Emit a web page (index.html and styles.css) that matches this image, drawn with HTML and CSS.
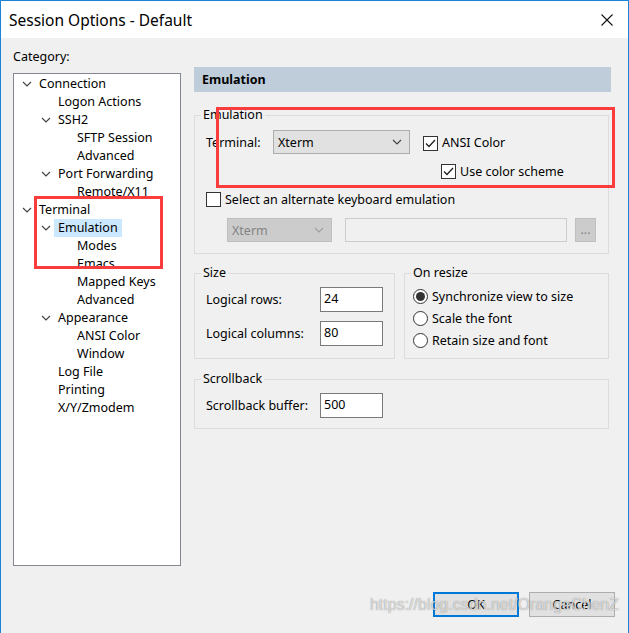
FILE: index.html
```html
<!DOCTYPE html>
<html lang="en">
<head>
    <meta charset="UTF-8">
    <title>Session Options - Default</title>
    <link rel="stylesheet" href="styles.css">
</head>
<body>
    <div class="window">
        <div class="titlebar">
            <span class="title">Session Options - Default</span>
            <svg class="close" width="12" height="12" viewBox="0 0 12 12">
                <path d="M0.5 0.5 L11.5 11.5 M11.5 0.5 L0.5 11.5" stroke="#111" stroke-width="1.1" fill="none"/>
            </svg>
        </div>

        <div class="dialog">
            <div class="main">
                <div class="left">
                    <div class="cat-label">Category:</div>
                    <ul class="tree">
                        <li class="lvl0"><span class="chev"><svg width="10" height="6" viewBox="0 0 10 6"><polyline points="1,1 5,5 9,1"/></svg></span><span class="txt">Connection</span></li>
                        <li class="lvl1"><span class="chev"></span><span class="txt">Logon Actions</span></li>
                        <li class="lvl1"><span class="chev"><svg width="10" height="6" viewBox="0 0 10 6"><polyline points="1,1 5,5 9,1"/></svg></span><span class="txt">SSH2</span></li>
                        <li class="lvl2"><span class="chev"></span><span class="txt">SFTP Session</span></li>
                        <li class="lvl2"><span class="chev"></span><span class="txt">Advanced</span></li>
                        <li class="lvl1"><span class="chev"><svg width="10" height="6" viewBox="0 0 10 6"><polyline points="1,1 5,5 9,1"/></svg></span><span class="txt">Port Forwarding</span></li>
                        <li class="lvl2"><span class="chev"></span><span class="txt">Remote/X11</span></li>
                        <li class="lvl0"><span class="chev"><svg width="10" height="6" viewBox="0 0 10 6"><polyline points="1,1 5,5 9,1"/></svg></span><span class="txt">Terminal</span></li>
                        <li class="lvl1"><span class="chev"><svg width="10" height="6" viewBox="0 0 10 6"><polyline points="1,1 5,5 9,1"/></svg></span><span class="txt selected">Emulation</span></li>
                        <li class="lvl2"><span class="chev"></span><span class="txt">Modes</span></li>
                        <li class="lvl2"><span class="chev"></span><span class="txt">Emacs</span></li>
                        <li class="lvl2"><span class="chev"></span><span class="txt">Mapped Keys</span></li>
                        <li class="lvl2"><span class="chev"></span><span class="txt">Advanced</span></li>
                        <li class="lvl1"><span class="chev"><svg width="10" height="6" viewBox="0 0 10 6"><polyline points="1,1 5,5 9,1"/></svg></span><span class="txt">Appearance</span></li>
                        <li class="lvl2"><span class="chev"></span><span class="txt">ANSI Color</span></li>
                        <li class="lvl2"><span class="chev"></span><span class="txt">Window</span></li>
                        <li class="lvl1"><span class="chev"></span><span class="txt">Log File</span></li>
                        <li class="lvl1"><span class="chev"></span><span class="txt">Printing</span></li>
                        <li class="lvl1"><span class="chev"></span><span class="txt">X/Y/Zmodem</span></li>
                    </ul>
                </div>

                <div class="right">
                    <div class="page-head">Emulation</div>

                    <fieldset class="group emu">
                        <legend>Emulation</legend>
                        <div class="row term-row">
                            <span class="lbl term-lbl">Terminal:</span>
                            <div class="combo term-combo">
                                <span>Xterm</span>
                                <svg width="10" height="6" viewBox="0 0 10 6"><polyline points="1,1 5,5 9,1"/></svg>
                            </div>
                            <span class="check on ansi"><svg width="13" height="13" viewBox="0 0 13 13"><polyline points="2,6.5 5,9.5 11,3"/></svg></span>
                            <span class="check-lbl">ANSI Color</span>
                        </div>
                        <div class="row scheme-row">
                            <span class="check on"><svg width="13" height="13" viewBox="0 0 13 13"><polyline points="2,6.5 5,9.5 11,3"/></svg></span>
                            <span class="check-lbl">Use color scheme</span>
                        </div>
                        <div class="row alt-row">
                            <span class="check"></span>
                            <span class="check-lbl">Select an alternate keyboard emulation</span>
                        </div>
                        <div class="row disabled-row">
                            <div class="combo off">
                                <span>Xterm</span>
                                <svg width="10" height="6" viewBox="0 0 10 6"><polyline points="1,1 5,5 9,1"/></svg>
                            </div>
                            <div class="field off"></div>
                            <div class="dots">...</div>
                        </div>
                    </fieldset>

                    <div class="pair">
                        <fieldset class="group size">
                            <legend>Size</legend>
                            <div class="row num-row">
                                <span class="lbl num-lbl">Logical rows:</span>
                                <div class="field">24</div>
                            </div>
                            <div class="row num-row">
                                <span class="lbl num-lbl">Logical columns:</span>
                                <div class="field">80</div>
                            </div>
                        </fieldset>
                        <fieldset class="group resize">
                            <legend>On resize</legend>
                            <div class="radio-row"><span class="radio on"></span>Synchronize view to size</div>
                            <div class="radio-row"><span class="radio"></span>Scale the font</div>
                            <div class="radio-row"><span class="radio"></span>Retain size and font</div>
                        </fieldset>
                    </div>

                    <fieldset class="group scroll">
                        <legend>Scrollback</legend>
                        <div class="row num-row">
                            <span class="lbl num-lbl">Scrollback buffer:</span>
                            <div class="field">500</div>
                        </div>
                    </fieldset>
                </div>
            </div>

            <div class="buttons">
                <button class="btn default">OK</button>
                <button class="btn">Cancel</button>
            </div>
        </div>

        <div class="mark mark-tree"></div>
        <div class="mark mark-emu"></div>
        <div class="watermark">https://blog.csdn.net/OrangeChenZ</div>
    </div>
</body>
</html>
```

FILE: styles.css
```css
body {
    margin: 0;
    font-family: "Noto Sans", "Open Sans", sans-serif;
    font-size: 12.5px;
    color: #000;
}
.window {
    position: relative;
    width: 629px;
    height: 633px;
    box-sizing: border-box;
    border: 1px solid #1883d7;
    border-bottom: none;
    display: flex;
    flex-direction: column;
    overflow: hidden;
}
.titlebar {
    height: 37px;
    background: #fff;
    display: flex;
    align-items: center;
    justify-content: space-between;
    padding: 0 15px 0 8px;
    flex-shrink: 0;
}
.title {
    font-size: 15.5px;
}
.dialog {
    flex: 1;
    background: #f0f0f0;
    padding: 11px 13px 16px 12px;
    display: flex;
    flex-direction: column;
}
.main {
    display: flex;
    align-items: flex-start;
    gap: 13px;
}
.left {
    width: 168px;
}
.cat-label {
    line-height: 16px;
    margin-bottom: 8px;
}
.tree {
    list-style: none;
    margin: 0;
    padding: 1px 0 0 6px;
    height: 490px;
    background: #fff;
    border: 1px solid #828790;
}
.tree li {
    display: flex;
    align-items: center;
    height: 18px;
}
.tree .lvl1 {
    padding-left: 19px;
}
.tree .lvl2 {
    padding-left: 38px;
}
.chev {
    width: 15px;
    height: 18px;
    display: flex;
    align-items: center;
    padding-left: 2px;
    box-sizing: border-box;
}
.chev polyline, .combo polyline {
    fill: none;
    stroke: #444;
    stroke-width: 1.2;
}
.txt {
    padding: 0 4px;
    line-height: 18px;
    white-space: nowrap;
}
.txt.selected {
    background: #cce8ff;
}
.right {
    width: 417px;
    margin-top: 18px;
}
.page-head {
    height: 25px;
    line-height: 26px;
    background: #bfcddb;
    padding-left: 8px;
    font-weight: bold;
}
.group {
    margin: 0 2px 0 0;
    border: 1px solid #dcdcdc;
    padding: 6px 11px 11px;
    min-width: 0;
}
.group legend {
    padding: 0 2px;
    margin-left: -5px;
    line-height: 16px;
}
.emu {
    margin-top: 15px;
    padding-top: 7px;
}
.row {
    display: flex;
    align-items: center;
}
.term-row {
    height: 24px;
}
.term-lbl {
    width: 67px;
}
.combo {
    box-sizing: border-box;
    height: 24px;
    border: 1px solid #adadad;
    background: #e1e1e1;
    display: flex;
    align-items: center;
    justify-content: space-between;
    padding: 0 7px 0 4px;
}
.term-combo {
    width: 137px;
    margin-right: 13px;
}
.check {
    box-sizing: border-box;
    width: 15px;
    height: 15px;
    border: 1px solid #333;
    background: #fff;
    display: flex;
    align-items: center;
    justify-content: center;
    margin-right: 4px;
    flex-shrink: 0;
}
.check polyline {
    fill: none;
    stroke: #222;
    stroke-width: 1.3;
}
.ansi {
    margin-top: 2px;
}
.scheme-row {
    height: 22px;
    margin-top: 6px;
    padding-left: 235px;
}
.alt-row {
    height: 22px;
    margin-top: 6px;
}
.disabled-row {
    margin-top: 8px;
    padding-left: 21px;
}
.combo.off {
    width: 105px;
    background: #cccccc;
    border-color: #bfbfbf;
    color: #838383;
}
.combo.off polyline {
    stroke: #a0a0a0;
}
.field {
    box-sizing: border-box;
    width: 63px;
    height: 25px;
    background: #fff;
    border: 1px solid #7a7a7a;
    padding: 2px 0 0 3px;
    line-height: 18px;
}
.field.off {
    width: 222px;
    height: 24px;
    margin-left: 13px;
    background: #f0f0f0;
    border-color: #cccccc;
}
.dots {
    box-sizing: border-box;
    width: 21px;
    height: 24px;
    margin-left: 8px;
    background: #cccccc;
    border: 1px solid #bfbfbf;
    color: #838383;
    text-align: center;
    line-height: 22px;
}
.pair {
    display: flex;
    gap: 9px;
    margin-top: 11px;
    margin-right: 2px;
}
.size {
    width: 201px;
    box-sizing: border-box;
    margin: 0;
}
.resize {
    flex: 1;
    margin: 0;
    padding: 4px 8px 7px;
}
.resize legend {
    margin-left: -2px;
}
.num-row {
    height: 25px;
}
.num-row + .num-row {
    margin-top: 9px;
}
.num-lbl {
    width: 114px;
}
.radio-row {
    display: flex;
    align-items: center;
    height: 22px;
}
.radio {
    box-sizing: border-box;
    width: 15px;
    height: 15px;
    border: 1px solid #333;
    border-radius: 50%;
    background: #fff;
    margin-right: 4px;
    display: flex;
    align-items: center;
    justify-content: center;
}
.radio.on::after {
    content: "";
    width: 9px;
    height: 9px;
    border-radius: 50%;
    background: #333;
}
.scroll {
    margin-top: 12px;
    padding-bottom: 10px;
}
.buttons {
    margin-top: auto;
    display: flex;
    justify-content: flex-end;
    gap: 10px;
}
.btn {
    box-sizing: border-box;
    width: 86px;
    height: 25px;
    font: inherit;
    background: #e1e1e1;
    border: 1px solid #adadad;
    padding: 0;
}
.btn.default {
    border: 2px solid #0078d7;
}
.mark {
    position: absolute;
    border: 3px solid #fb3c3c;
}
.mark-tree {
    left: 33px;
    top: 195px;
    width: 123px;
    height: 67px;
}
.mark-emu {
    left: 215px;
    top: 106px;
    width: 393px;
    height: 75px;
}
.watermark {
    position: absolute;
    right: 9px;
    bottom: 19px;
    font-family: "Liberation Sans", sans-serif;
    font-size: 16px;
    color: rgba(255, 255, 255, 0.7);
    text-shadow: 0 0 1px rgba(60, 60, 60, 0.7);
}
```
